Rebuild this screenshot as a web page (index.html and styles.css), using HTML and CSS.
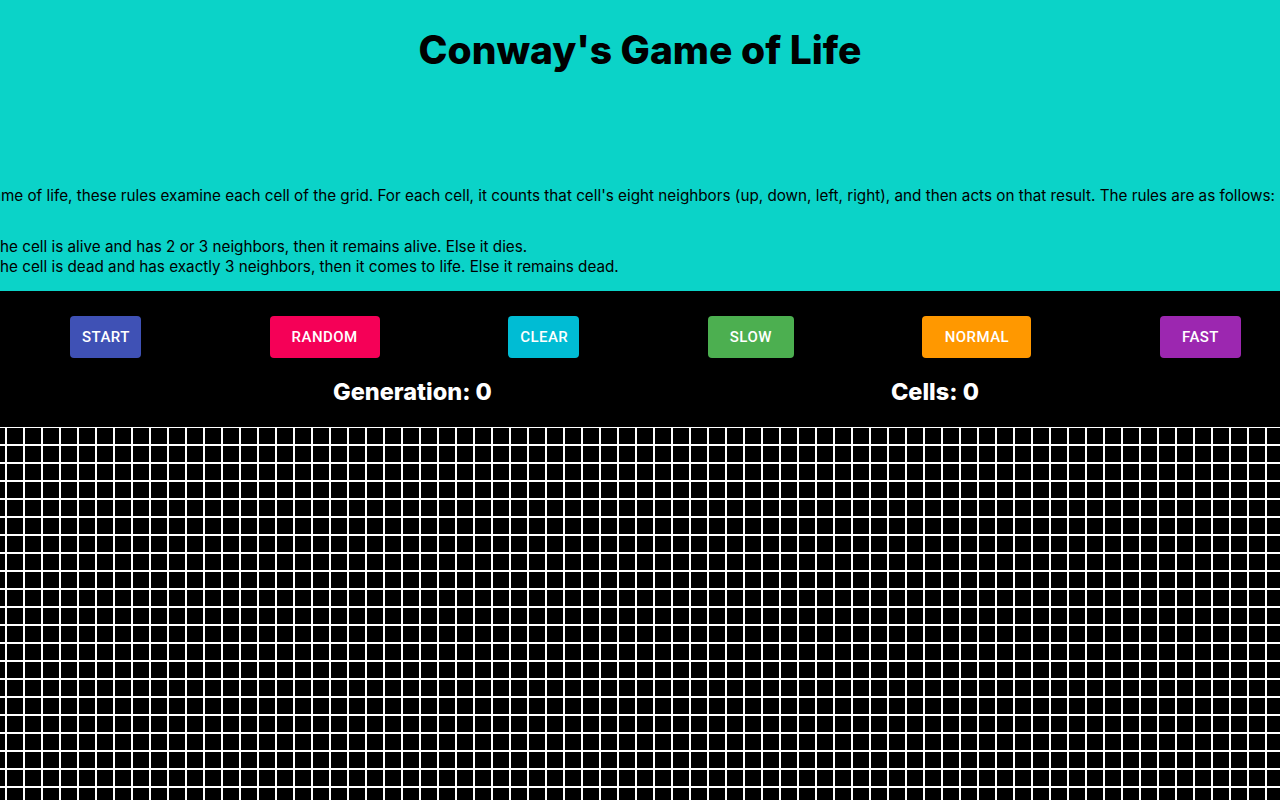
FILE: index.html
```html
<!DOCTYPE html>
<html lang="en">
<head>
<meta charset="utf-8">
<title>Conway's Game of Life</title>
<link rel="stylesheet" href="styles.css">
</head>
<body>
<header class="intro">
  <h1 class="title">Conway's Game of Life</h1>
  <div class="about">
    <p class="about-text">Game of life, these rules examine each cell of the grid. For each cell, it counts that cell's eight neighbors (up, down, left, right), and then acts on that result. The rules are as follows:</p>
    <div class="rules">
      <p class="rule">If the cell is alive and has 2 or 3 neighbors, then it remains alive. Else it dies.</p>
      <p class="rule">If the cell is dead and has exactly 3 neighbors, then it comes to life. Else it remains dead.</p>
    </div>
  </div>
</header>
<main class="board">
  <div class="controls">
    <button class="btn btn-start">Start</button>
    <button class="btn btn-random">Random</button>
    <button class="btn btn-clear">Clear</button>
    <button class="btn btn-slow">Slow</button>
    <button class="btn btn-normal">Normal</button>
    <button class="btn btn-fast">Fast</button>
  </div>
  <div class="stats">
    <h2 class="stat">Generation: 0</h2>
    <h2 class="stat">Cells: 0</h2>
  </div>
  <div class="grid" id="grid"></div>
</main>
<script src="script.js"></script>
</body>
</html>
```

FILE: styles.css
```css
html {
  background: #000;
  overflow: hidden;
}

body {
  margin: 0;
  font-family: Inter, "Noto Sans", sans-serif;
  overflow: hidden;
}

.intro {
  background: #0bd3c8;
  color: #000;
  padding-top: 27px;
  padding-bottom: 14px;
}

.title {
  margin: 0;
  text-align: center;
  font-size: 39px;
  line-height: 46px;
  font-weight: 800;
}

.about {
  margin-left: -19px;
  width: 1320px;
  font-size: 15.25px;
  line-height: 20px;
}

.about-text {
  margin: 113px 0 0;
}

.rules {
  margin-top: 31px;
}

.rule {
  margin: 0;
}

.board {
  background: #000;
}

.controls {
  display: flex;
  justify-content: space-between;
  align-items: center;
  padding: 25px 39px 0 70px;
}

.btn {
  font-family: Roboto, sans-serif;
  font-weight: 500;
  font-size: 15px;
  line-height: 26px;
  letter-spacing: 0.46px;
  text-transform: uppercase;
  color: #fff;
  border: 0;
  border-radius: 4px;
  padding: 8px 22px;
  height: 42px;
  cursor: pointer;
}

.btn-start { background: #3f51b5; padding: 8px 12px; width: 71px; }
.btn-random { background: #f50057; width: 110px; }
.btn-clear { background: #00bcd4; padding: 8px 12px; width: 71px; }
.btn-slow { background: #4caf50; width: 86px; }
.btn-normal { background: #ff9800; width: 109px; }
.btn-fast { background: #9c27b0; width: 81px; }

.stats {
  display: flex;
  gap: 399px;
  padding-left: 333px;
  margin-top: 19px;
  margin-bottom: 21px;
}

.stat {
  margin: 0;
  color: #fff;
  font-size: 23.5px;
  line-height: 29px;
  font-weight: 800;
}

.grid {
  display: grid;
  grid-template-columns: repeat(74, 18px);
  grid-auto-rows: 18px;
  margin-left: -12px;
  width: max-content;
}

.cell {
  box-sizing: border-box;
  border: 1px solid #fff;
  background: #000;
}
```

FILE: script.js
```js
const grid = document.getElementById('grid');
const rows = 21;
const cols = 74;
for (let i = 0; i < rows * cols; i++) {
  const cell = document.createElement('div');
  cell.className = 'cell';
  grid.appendChild(cell);
}
```
